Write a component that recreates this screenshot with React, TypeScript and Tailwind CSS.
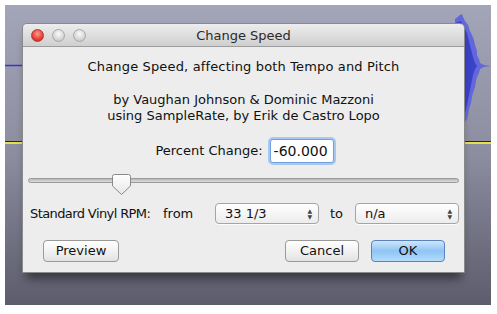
import React from 'react';

const font = { fontFamily: '"DejaVu Sans", "Liberation Sans", sans-serif' };

const Tracks: React.FC = () => (
  <svg className="absolute inset-0" width="486" height="300" viewBox="0 0 486 300">
    {/* track lines behind the dialog */}
    <line x1="0" y1="60.5" x2="20" y2="60.5" stroke="#3438c8" strokeWidth="1.5" />
    <line x1="0" y1="136.5" x2="486" y2="136.5" stroke="#2a2a22" strokeWidth="1" />
    <line x1="0" y1="138" x2="486" y2="138" stroke="#e8e04a" strokeWidth="2" />
  </svg>
);

// audio envelope peeking out to the right of the dialog
const Wave: React.FC = () => (
  <svg className="absolute left-[450px] top-0 z-10" width="36" height="125" viewBox="0 0 36 125">
    <path
      d="M0 14 L5 10 L7 9 L8 12 L10 16 L13 20 L15 26 L17 30 L19 35 L20 40 L22 46 L22 50 L24 54 L25 58 L29 60 L36 61 L29 62 L25 64 L24 68 L22 72 L21 76 L20 82 L18 88 L17 92 L16 98 L14 104 L13 110 L12 114 L10 117 L0 117 Z"
      fill="#6268dc"
    />
    <path
      d="M0 18 L6 16 L9 22 L12 28 L14 36 L16 44 L18 52 L20 58 L22 61 L20 64 L18 70 L16 80 L14 90 L12 100 L10 108 L0 111 Z"
      fill="#3c42c8"
    />
  </svg>
);

const Traffic: React.FC<{ red?: boolean }> = ({ red }) => (
  <div
    className={
      red
        ? 'w-[13px] h-[13px] rounded-full border border-[#b23a34] bg-[radial-gradient(circle_at_50%_35%,#ff9a90_0%,#e8453c_55%,#b0201a_100%)]'
        : 'w-[13px] h-[13px] rounded-full border border-[#a8a8a8] bg-[radial-gradient(circle_at_50%_35%,#fafafa_0%,#d6d6d6_60%,#b8b8b8_100%)]'
    }
  />
);

const Select: React.FC<{ value: string }> = ({ value }) => (
  <div className="w-[104px] h-[21px] flex items-center justify-between pl-[9px] pr-[6px] rounded-[4px] border border-[#a5a5a5] bg-gradient-to-b from-white to-[#ececec] shadow-[0_1px_0_rgba(255,255,255,0.8)]">
    <span className="text-[13px] text-[#111] leading-none">{value}</span>
    <span className="flex flex-col items-center text-[#444] leading-none text-[6px]">
      <span>▲</span>
      <span>▼</span>
    </span>
  </div>
);

const Button: React.FC<{ label: string; w: string; primary?: boolean }> = ({ label, w, primary }) => (
  <div
    className={
      primary
        ? `${w} h-[22px] flex items-center justify-center rounded-[4px] border border-[#5a82bf] bg-gradient-to-b from-[#cfe6fb] via-[#8ec4f4] to-[#b4dcfb] text-[13px] text-[#111]`
        : `${w} h-[22px] flex items-center justify-center rounded-[4px] border border-[#9a9a9a] bg-gradient-to-b from-white via-[#f2f2f2] to-[#e2e2e2] text-[13px] text-[#111]`
    }
  >
    {label}
  </div>
);

export default function App() {
  return (
    <div className="w-[497px] h-[314px] bg-white p-[5px]" style={font}>
      <div className="relative w-[486px] h-[300px] overflow-hidden bg-gradient-to-b from-[#a3a5b8] via-[#8c8d9f] to-[#5c5c6c] pl-[17px] pt-[18px]">
        <Tracks />
        <Wave />
        <div className="relative z-20 w-[443px] h-[250px] flex flex-col rounded-t-[5px] overflow-hidden border border-[#8a8a8a] shadow-[0_10px_10px_-4px_rgba(0,0,0,0.45)]">
          {/* title bar */}
          <div className="relative h-[23px] flex items-center border-b border-[#9c9c9c] bg-gradient-to-b from-[#ededed] to-[#cfcfcf]">
            <div className="flex items-center gap-[8px] pl-[8px]">
              <Traffic red />
              <Traffic />
              <Traffic />
            </div>
            <div className="absolute inset-0 flex items-center justify-center text-[13px] text-[#2a2a2a] pt-[1px]">Change Speed</div>
          </div>
          {/* body */}
          <div className="flex-1 bg-[#ededed] flex flex-col text-[13px] text-[#111]">
            <div className="mt-[11px] text-center leading-[18px] tracking-[0.15px]">Change Speed, affecting both Tempo and Pitch</div>
            <div className="mt-[16px] text-center leading-[16px]">
              <div>by Vaughan Johnson &amp; Dominic Mazzoni</div>
              <div>using SampleRate, by Erik de Castro Lopo</div>
            </div>
            <div className="mt-[15px] flex items-center justify-center gap-[7px] pl-[2px]">
              <span>Percent Change:</span>
              <div className="w-[64px] h-[24px] rounded-[3px] border border-[#6f9fe0] shadow-[0_0_0_2px_#a9c8f0] bg-white flex items-center pl-[3px] text-[14px]">
                -60.000
              </div>
            </div>
            {/* slider */}
            <div className="relative mt-[11px] mx-[5px] h-[20px]">
              <div className="absolute left-0 right-0 top-[4px] h-[5px] rounded-full border border-[#9a9a9a] bg-gradient-to-b from-[#b8b8b8] to-[#dcdcdc]" />
              <svg className="absolute left-[84px] top-0" width="19" height="21" viewBox="0 0 19 21">
                <defs>
                  <linearGradient id="th" x1="0" y1="0" x2="0" y2="1">
                    <stop offset="0" stopColor="#ffffff" />
                    <stop offset="1" stopColor="#e6e6e6" />
                  </linearGradient>
                </defs>
                <path d="M2.5 0.5 H16.5 Q18.5 0.5 18.5 2.5 V12 L9.5 20.5 L0.5 12 V2.5 Q0.5 0.5 2.5 0.5 Z" fill="url(#th)" stroke="#8a8a8a" />
              </svg>
            </div>
            {/* rpm row */}
            <div className="mt-[9px] flex items-center pl-[7px]">
              <span className="w-[133px] shrink-0 whitespace-nowrap tracking-[-0.6px]">Standard Vinyl RPM:</span>
              <span className="w-[52px] shrink-0">from</span>
              <Select value="33 1/3" />
              <span className="ml-[11px] w-[25px] shrink-0">to</span>
              <Select value="n/a" />
            </div>
            {/* buttons */}
            <div className="mt-[16px] flex items-center pl-[20px]">
              <Button label="Preview" w="w-[76px]" />
              <div className="ml-[166px]">
                <Button label="Cancel" w="w-[74px]" />
              </div>
              <div className="ml-[12px]">
                <Button label="OK" w="w-[74px]" primary />
              </div>
            </div>
          </div>
        </div>
      </div>
    </div>
  );
}
